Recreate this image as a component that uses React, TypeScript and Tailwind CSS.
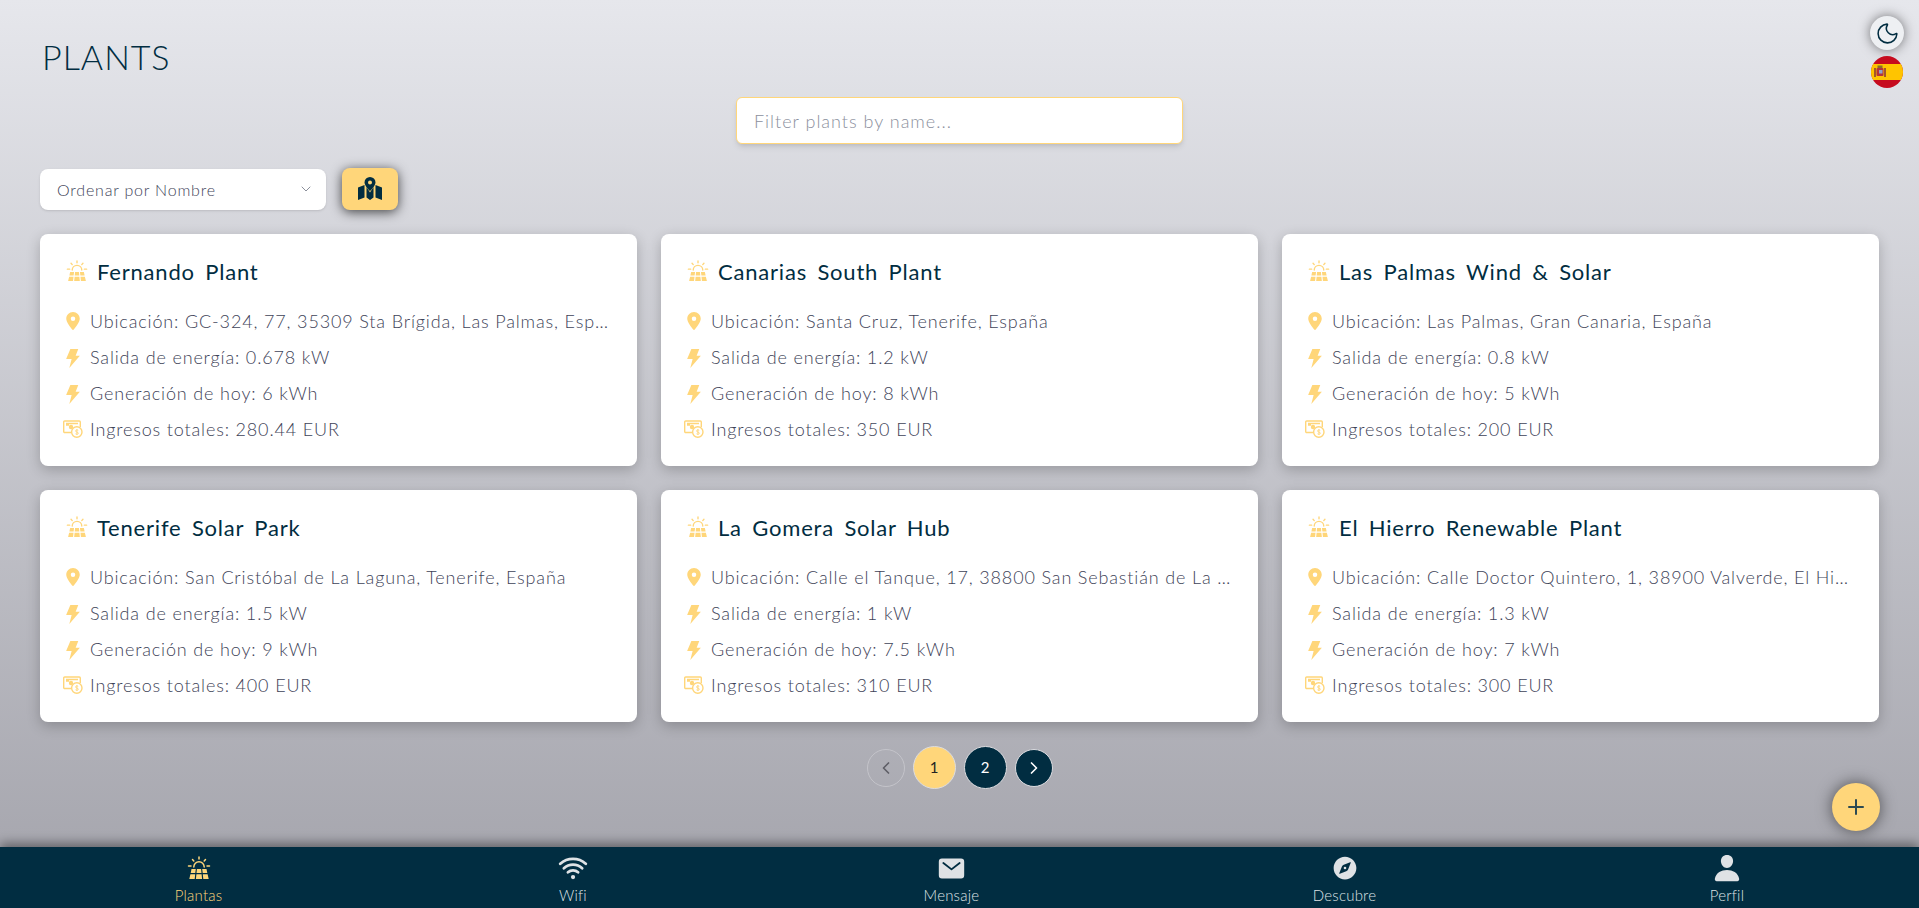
import { ChevronDown, ChevronLeft, ChevronRight, Moon, Plus } from "lucide-react";
import { FaLocationDot } from "react-icons/fa6";
import { IoCompass, IoMail, IoPerson, IoWifi } from "react-icons/io5";

const plants = [
  { name: "Fernando Plant", location: "GC-324, 77, 35309 Sta Brígida, Las Palmas, España", power: "0.678 kW", today: "6 kWh", income: "280.44 EUR" },
  { name: "Canarias South Plant", location: "Santa Cruz, Tenerife, España", power: "1.2 kW", today: "8 kWh", income: "350 EUR" },
  { name: "Las Palmas Wind & Solar", location: "Las Palmas, Gran Canaria, España", power: "0.8 kW", today: "5 kWh", income: "200 EUR" },
  { name: "Tenerife Solar Park", location: "San Cristóbal de La Laguna, Tenerife, España", power: "1.5 kW", today: "9 kWh", income: "400 EUR" },
  { name: "La Gomera Solar Hub", location: "Calle el Tanque, 17, 38800 San Sebastián de La Gomera", power: "1 kW", today: "7.5 kWh", income: "310 EUR" },
  { name: "El Hierro Renewable Plant", location: "Calle Doctor Quintero, 1, 38900 Valverde, El Hierro", power: "1.3 kW", today: "7 kWh", income: "300 EUR" },
];

function SolarIcon({ size }: { size: number }) {
  return (
    <svg width={size} height={size} viewBox="0 0 24 24" fill="currentColor" className="shrink-0">
      <g stroke="currentColor" strokeWidth="1.5" strokeLinecap="round" fill="none">
        <path d="M12 1v2M5.500 3.500l1.300 1.500M18.500 3.500l-1.300 1.500M1.500 10h2.500M20 10h2.500" />
        <path d="M6.800 11a5.200 5.200 0 0 1 10.400 0" />
      </g>
      <path d="M4.500 13h4.300l-.5 4H3.700zM9.900 13h4.200l.4 4h-5zM15.200 13h4.300l.8 4h-4.600zM3.400 18.200h4.800l-.5 4.800H2.300zM9.400 18.200h5.200l.5 4.800H8.900zM15.800 18.200h4.800l1.100 4.800h-5.400z" />
    </svg>
  );
}

function BoltIcon() {
  return (
    <svg width="14" height="19" viewBox="0 0 13 18" fill="currentColor" className="mt-[2px]">
      <path d="M4 0h7.500L9 6.500h4L3 18l2.200-8.500H0z" />
    </svg>
  );
}

function IncomeIcon() {
  return (
    <svg width="20" height="18" viewBox="0 0 20 18" fill="none" stroke="currentColor" strokeWidth="1.4">
      <path d="M8 12.500H1.700a1 1 0 0 1-1-1V2a1 1 0 0 1 1-1h14.600a1 1 0 0 1 1 1v5" />
      <path d="M3 3.500h12M3 5h3" />
      <circle cx="8" cy="7" r="2.200" fill="currentColor" stroke="none" />
      <circle cx="13.800" cy="12" r="5.200" fill="white" />
      <path d="M15.200 10.400c-1-.7-2.700-.5-2.700.6 0 1.400 2.900.8 2.900 2.200 0 1.100-1.800 1.300-2.900.6M13.900 9v6" strokeWidth="0.9" />
    </svg>
  );
}

function MapPinIcon() {
  return (
    <svg width="24" height="24" viewBox="0 0 24 24" fill="currentColor">
      <path d="M0 10.500 6.500 8v12.500L0 23zM8.500 10 12 15.500 15.500 10v10.500L12 23l-3.500-2.500zM17.500 8l6.500 2.500V23l-6.500-2.500z" />
      <path fillRule="evenodd" d="M12 0a5.500 5.500 0 0 0-5.500 5.500C6.500 9 12 14 12 14s5.500-5 5.500-8.500A5.500 5.500 0 0 0 12 0zm0 3.500a2 2 0 1 1 0 4 2 2 0 0 1 0-4z" />
    </svg>
  );
}

function SpainFlag() {
  return (
    <svg viewBox="0 0 32 32" className="h-8 w-8 rounded-full">
      <rect width="32" height="32" fill="#c60b1e" />
      <rect y="8" width="32" height="16" fill="#ffc400" />
      <rect x="3" y="12" width="2" height="9" fill="#a5552a" />
      <rect x="13" y="12" width="2" height="9" fill="#a5552a" />
      <rect x="5.500" y="12" width="7" height="8" rx="1" fill="#b5323a" />
      <rect x="6.500" y="9.500" width="5" height="2.500" fill="#8a6d2c" />
      <rect x="8" y="14" width="3.500" height="3.500" fill="#8fa3c4" />
    </svg>
  );
}

const navItems = [
  { label: "Plantas", icon: <SolarIcon size={24} />, active: true },
  { label: "Wifi", icon: <IoWifi size={34} /> },
  { label: "Mensaje", icon: <IoMail size={29} /> },
  { label: "Descubre", icon: <IoCompass size={28} /> },
  { label: "Perfil", icon: <IoPerson size={30} /> },
];

function Row({ icon, text }: { icon: React.ReactNode; text: string }) {
  return (
    <div className="flex h-9 items-center">
      <span className="-ml-[3px] flex w-[24px] shrink-0 justify-center text-[#ffd67a]">{icon}</span>
      <span className="ml-[5px] truncate text-[18px] font-light tracking-[0.85px] text-[#3e4358]">{text}</span>
    </div>
  );
}

function PlantCard({ plant }: { plant: (typeof plants)[number] }) {
  return (
    <div className="h-[232px] rounded-lg bg-white px-6 pt-5 shadow-[0_4px_14px_rgba(0,0,0,0.22)]">
      <div className="flex h-[34px] items-center text-[#ffd67a]">
        <span className="ml-[2px]">
          <SolarIcon size={22} />
        </span>
        <h2 className="ml-[9px] text-[22px] font-normal tracking-[0.8px] [word-spacing:4px] text-[#012d41]">{plant.name}</h2>
      </div>
      <div className="mt-[15px]">
        <Row icon={<FaLocationDot size={18} />} text={`Ubicación: ${plant.location}`} />
        <Row icon={<BoltIcon />} text={`Salida de energía: ${plant.power}`} />
        <Row icon={<BoltIcon />} text={`Generación de hoy: ${plant.today}`} />
        <Row icon={<IncomeIcon />} text={`Ingresos totales: ${plant.income}`} />
      </div>
    </div>
  );
}

export default function App() {
  return (
    <div className="relative flex h-screen flex-col overflow-hidden bg-gradient-to-b from-[#e6e7ec] to-[#a3a3ab] font-['Lato',sans-serif]">
      <div className="absolute right-[15px] top-4 flex flex-col items-center gap-[6px]">
        <button className="flex h-[34px] w-[34px] items-center justify-center rounded-full bg-[#eef0f3] text-[#012d41] shadow-[0_0_12px_rgba(0,0,0,0.5)]">
          <Moon size={25} strokeWidth={1.5} />
        </button>
        <SpainFlag />
      </div>

      <main className="flex-1 px-10 pt-[36px]">
        <h1 className="ml-[2px] text-[34px] font-light leading-[41px] tracking-[1px] text-[#012d41]">PLANTS</h1>

        <div className="mt-5 flex justify-center">
          <input
            placeholder="Filter plants by name..."
            className="h-[47px] w-[447px] rounded-md border border-[#ffd67a] bg-white px-[17px] text-[18px] font-light tracking-[1px] text-[#012d41] shadow-md outline-none placeholder:text-[#8b8f9d]"
          />
        </div>

        <div className="mt-[24px] flex items-center gap-4">
          <div className="flex h-[41px] w-[286px] items-center justify-between rounded-lg bg-white pl-[17px] pr-3 shadow-sm">
            <span className="translate-y-px text-[16px] font-light tracking-[0.8px] text-[#3e4358]">Ordenar por Nombre</span>
            <ChevronDown size={16} strokeWidth={1.5} className="text-[#8b8f9b]" />
          </div>
          <button className="flex h-[42px] w-[56px] items-center justify-center rounded-lg bg-[#ffd67a] text-[#012d41] shadow-[0_2px_12px_rgba(0,0,0,0.7)]">
            <MapPinIcon />
          </button>
        </div>

        <div className="mt-6 grid grid-cols-3 gap-x-6 gap-y-[24px]">
          {plants.map((plant) => (
            <PlantCard key={plant.name} plant={plant} />
          ))}
        </div>

        <div className="mt-[24px] flex items-center justify-center gap-2">
          <button className="flex h-[38px] w-[38px] items-center justify-center rounded-full border border-[#c4c4ca] text-[#5e5e66]">
            <ChevronLeft size={20} />
          </button>
          <button className="flex h-[43px] w-[43px] items-center justify-center rounded-full border border-[#dcdce0] bg-[#ffd67a] text-[15px] text-[#222]">1</button>
          <button className="flex h-[43px] w-[43px] items-center justify-center rounded-full border border-[#dcdce0] bg-[#012d41] text-[15px] text-white">2</button>
          <button className="flex h-[38px] w-[38px] items-center justify-center rounded-full border border-[#dcdce0] bg-[#012d41] text-white">
            <ChevronRight size={20} />
          </button>
        </div>
      </main>

      <button className="absolute bottom-[77px] right-[39px] flex h-12 w-12 items-center justify-center rounded-full bg-[#ffd67a] text-[#2c4a52] shadow-[0_0_16px_rgba(0,0,0,0.55)]">
        <Plus size={24} />
      </button>

      <nav className="flex h-[61px] shrink-0 justify-around bg-[#012d41] px-2 shadow-[0_-4px_10px_rgba(0,0,0,0.4)]">
        {navItems.map((item) => (
          <div key={item.label} className={`flex flex-col items-center justify-end pb-[3px] ${item.active ? "text-[#ffd67a]" : "text-[#dfe2e5]"}`}>
            <span className="flex h-[34px] items-center">{item.icon}</span>
            <span className="text-[15px] font-light leading-[20px] tracking-[0.2px]">{item.label}</span>
          </div>
        ))}
      </nav>
    </div>
  );
}
